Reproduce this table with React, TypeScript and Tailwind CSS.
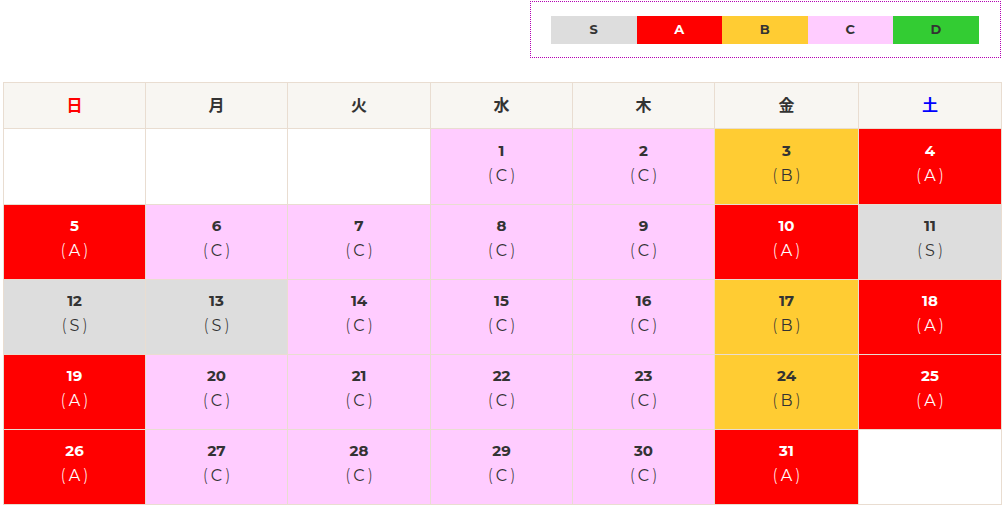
type Grade = "S" | "A" | "B" | "C" | "D";

const gradeStyle: Record<Grade, string> = {
  S: "bg-[#dddddd] text-[#333333]",
  A: "bg-[#ff0000] text-white",
  B: "bg-[#ffcc33] text-[#333333]",
  C: "bg-[#ffccff] text-[#333333]",
  D: "bg-[#33cc33] text-[#333333]",
};

const weekdays = [
  { label: "日", cls: "text-[#ff0000]" },
  { label: "月", cls: "text-[#333333]" },
  { label: "火", cls: "text-[#333333]" },
  { label: "水", cls: "text-[#333333]" },
  { label: "木", cls: "text-[#333333]" },
  { label: "金", cls: "text-[#333333]" },
  { label: "土", cls: "text-[#0000ff]" },
];

const widths = [142, 142, 143, 142, 142, 144, 143];

// grade for each day of the month, 1..31
const grades: Grade[] = [
  "C", "C", "B", "A",
  "A", "C", "C", "C", "C", "A", "S",
  "S", "S", "C", "C", "C", "B", "A",
  "A", "C", "C", "C", "C", "B", "A",
  "A", "C", "C", "C", "C", "A",
];

const startOffset = 3;

export default function App() {
  const cells: (number | null)[] = [];
  for (let i = 0; i < startOffset; i++) cells.push(null);
  for (let d = 1; d <= 31; d++) cells.push(d);
  while (cells.length % 7) cells.push(null);
  const weeks: (number | null)[][] = [];
  for (let i = 0; i < cells.length; i += 7) weeks.push(cells.slice(i, i + 7));

  return (
    <div className="w-[1004px] h-[508px] bg-white px-[3px] pt-px font-['Montserrat','Noto_Sans','Noto_Sans_CJK_JP',sans-serif] text-[#333333]">
      <div className="flex justify-end">
        <div className="border border-dotted border-[#b300b3] w-[471px] h-[57px] pl-[20px] pt-[14px]">
          <div className="flex">
            {(["S", "A", "B", "C", "D"] as Grade[]).map((g) => (
              <div key={g} className={`w-[85.5px] h-[28px] flex items-center justify-center text-[13px] font-bold ${gradeStyle[g]}`}>
                {g}
              </div>
            ))}
          </div>
        </div>
      </div>

      <table className="mt-[24px] w-[998px] table-fixed border-collapse">
        <colgroup>
          {widths.map((w, i) => <col key={i} style={{ width: w }} />)}
        </colgroup>
        <thead>
          <tr className="h-[46px] bg-[#f8f6f2]">
            {weekdays.map((w) => (
              <th key={w.label} className={`border border-[#e9ddd1] pb-[3px] text-[16px] font-semibold font-['Noto_Sans_CJK_JP',sans-serif] ${w.cls}`}>
                {w.label}
              </th>
            ))}
          </tr>
        </thead>
        <tbody>
          {weeks.map((week, wi) => (
            <tr key={wi} className={wi === 0 ? "h-[76px]" : "h-[75px]"}>
              {week.map((d, di) => {
                if (d === null) return <td key={di} className="border border-[#e9ddd1] bg-white" />;
                const g = grades[d - 1];
                return (
                  <td key={di} className={`border border-[#e9ddd1] pb-[4px] text-center align-middle ${gradeStyle[g]}`}>
                    <div className="text-[15px] font-bold leading-[22px]">{d}</div>
                    <div className="text-[16px] leading-[28px]">
                      <span className="font-light mr-[3px]">(</span>{g}<span className="font-light ml-[3px]">)</span>
                    </div>
                  </td>
                );
              })}
            </tr>
          ))}
        </tbody>
      </table>
    </div>
  );
}
